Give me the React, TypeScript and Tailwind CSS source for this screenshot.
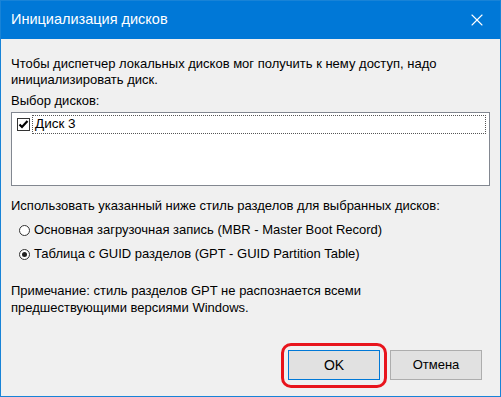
import { X } from "lucide-react";

function Radio({ checked, label }: { checked?: boolean; label: string }) {
  return (
    <div className="flex items-center gap-[4px] h-[24px]">
      <span className="w-[11px] h-[11px] rounded-full border border-[#333] bg-white flex items-center justify-center">
        {checked && <span className="w-[5px] h-[5px] rounded-full bg-[#222]" />}
      </span>
      <span>{label}</span>
    </div>
  );
}

export default function App() {
  return (
    <div
      className="w-[501px] h-[397px] flex flex-col border border-[#1883d7] bg-[#f0f0f0] text-[13px] text-black overflow-hidden"
      style={{ fontFamily: '"Liberation Sans", Arial, sans-serif' }}
    >
      <div className="h-[38px] shrink-0 bg-[#0078d7] flex items-center justify-between pl-[10px] pr-[13px] text-white">
        <span className="text-[14.5px]">Инициализация дисков</span>
        <X size={20} strokeWidth={1.3} />
      </div>

      <div className="flex-1 flex flex-col px-[10px] pt-[17px]">
        <p className="leading-[16px]">
          Чтобы диспетчер локальных дисков мог получить к нему доступ, надо
          <br />
          инициализировать диск.
        </p>

        <p className="mt-[4px] leading-[17px]">Выбор дисков:</p>

        <div className="mt-[3px] h-[74px] border border-[#828790] bg-white p-[2px] pr-[3px]">
          <div className="flex items-center gap-[2px] h-[19px]">
            <span className="ml-[3px] w-[13px] h-[13px] border border-[#333] bg-white flex items-center justify-center">
              <svg width="11" height="11" viewBox="0 0 11 11">
                <path d="M1.5 5.5 L4 8 L9.5 2" fill="none" stroke="#000" strokeWidth="2.2" />
              </svg>
            </span>
            <div className="flex-1 h-full flex items-center pl-[2px] border border-dotted border-[#555] text-[13.5px]">
              Диск 3
            </div>
          </div>
        </div>

        <p className="mt-[11px] leading-[17px]">
          Использовать указанный ниже стиль разделов для выбранных дисков:
        </p>
        <div className="mt-[4px] pl-[8px]">
          <Radio label="Основная загрузочная запись (MBR - Master Boot Record)" />
          <Radio checked label="Таблица с GUID разделов (GPT - GUID Partition Table)" />
        </div>

        <p className="mt-[16px] leading-[17px]">
          Примечание: стиль разделов GPT не распознается всеми
          <br />
          предшествующими версиями Windows.
        </p>

        <div className="mt-auto mb-[8px] flex justify-end items-center gap-[3px] pr-[8px]">
          <div className="rounded-[10px] border-[3px] border-[#e8141c] p-[4px] pb-[5px]">
            <button className="w-[92px] h-[30px] bg-[#e1e1e1] border border-[#0078d7] text-[14px]">
              OK
            </button>
          </div>
          <button className="w-[92px] h-[30px] bg-[#e1e1e1] border border-[#adadad] text-[13px] mb-[1px]">
            Отмена
          </button>
        </div>
      </div>
    </div>
  );
}
